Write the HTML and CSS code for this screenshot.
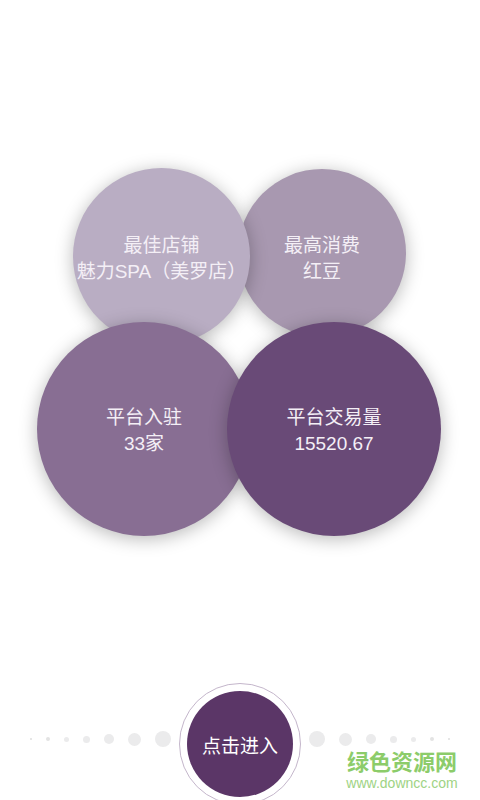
FILE: index.html
```html
<!DOCTYPE html>
<html lang="zh-CN">
<head>
<meta charset="utf-8">
<title>统计</title>
<link rel="stylesheet" href="styles.css">
</head>
<body>
<div class="page">
  <div class="row row-top">
    <div class="bubble b1"><span>最佳店铺</span><span>魅力SPA（美罗店）</span></div>
    <div class="bubble b2"><span>最高消费</span><span>红豆</span></div>
  </div>
  <div class="row row-bottom">
    <div class="bubble b3"><span>平台入驻</span><span>33家</span></div>
    <div class="bubble b4"><span>平台交易量</span><span>15520.67</span></div>
  </div>
  <div class="enter-row">
    <div class="dots">
      <i class="d d2"></i><i class="d d4"></i><i class="d d5"></i><i class="d d7"></i><i class="d d10"></i><i class="d d13"></i><i class="d d16"></i>
    </div>
    <div class="enter-ring"><div class="enter-btn">点击进入</div></div>
    <div class="dots">
      <i class="d d16"></i><i class="d d13"></i><i class="d d10"></i><i class="d d7"></i><i class="d d5"></i><i class="d d4"></i><i class="d d2"></i>
    </div>
  </div>
  <div class="watermark">
    <div class="wm-cn">绿色资源网</div>
    <div class="wm-en">www.downcc.com</div>
  </div>
</div>
</body>
</html>
```
FILE: styles.css
```css
html, body {
  margin: 0;
  padding: 0;
  background: #ffffff;
}
.page {
  position: relative;
  width: 480px;
  height: 800px;
  overflow: hidden;
  display: flex;
  flex-direction: column;
  font-family: "Liberation Sans", "Noto Sans CJK SC", sans-serif;
}
.row {
  display: flex;
  align-items: flex-start;
}
.row-top {
  margin-top: 168px;
  margin-left: 73px;
  position: relative;
  z-index: 1;
}
.row-bottom {
  margin-top: -23px;
  margin-left: 37px;
  position: relative;
  z-index: 2;
}
.bubble {
  box-sizing: border-box;
  border-radius: 50%;
  display: flex;
  flex-direction: column;
  align-items: center;
  justify-content: center;
  color: #f4eff6;
  font-size: 19px;
  line-height: 26px;
  white-space: nowrap;
  box-shadow: 0 3px 18px rgba(0, 0, 0, 0.28);
  flex: none;
  padding-top: 4px;
}
.bubble span { display: block; }
.b1 {
  width: 177px;
  height: 177px;
  background: #b9adc3;
  position: relative;
  z-index: 2;
}
.b2 {
  width: 168px;
  height: 168px;
  background: #a898b0;
  margin-left: -12px;
  margin-top: 1px;
  padding-top: 12px;
  position: relative;
  z-index: 1;
}
.b3 {
  width: 214px;
  height: 214px;
  background: #886e93;
  position: relative;
  z-index: 1;
}
.b4 {
  width: 214px;
  height: 214px;
  background: #694a77;
  margin-left: -24px;
  position: relative;
  z-index: 2;
}
.enter-row {
  margin-top: 147px;
  display: flex;
  align-items: center;
  justify-content: center;
}
.dots {
  display: flex;
  align-items: center;
  gap: 14px;
  margin-bottom: 10px;
}
.d {
  display: block;
  border-radius: 50%;
  background: #ebebec;
}
.d2 { width: 2px; height: 2px; background: #dedede; }
.d4 { width: 4px; height: 4px; background: #e3e3e3; }
.d5 { width: 5px; height: 5px; }
.d7 { width: 7px; height: 7px; }
.d10 { width: 10px; height: 10px; }
.d13 { width: 13px; height: 13px; }
.d16 { width: 16px; height: 16px; }
.enter-ring {
  width: 120px;
  height: 120px;
  border: 1px solid #c4b6cb;
  border-radius: 50%;
  background: #ffffff;
  margin: 0 8px;
  display: flex;
  align-items: center;
  justify-content: center;
  flex: none;
}
.enter-btn {
  width: 106px;
  height: 106px;
  border-radius: 50%;
  background: #5b3667;
  color: #ffffff;
  font-size: 19px;
  display: flex;
  align-items: center;
  justify-content: center;
}
.watermark {
  position: absolute;
  left: 346px;
  top: 747px;
  width: 112px;
  text-align: center;
}
.wm-cn {
  font-family: "Noto Sans CJK SC", sans-serif;
  font-weight: bold;
  font-size: 22px;
  line-height: 27px;
  color: #8ccc6a;
}
.wm-en {
  font-family: "Liberation Sans", sans-serif;
  font-size: 14px;
  line-height: 16px;
  margin-top: 1px;
  color: #9ed384;
}
```
